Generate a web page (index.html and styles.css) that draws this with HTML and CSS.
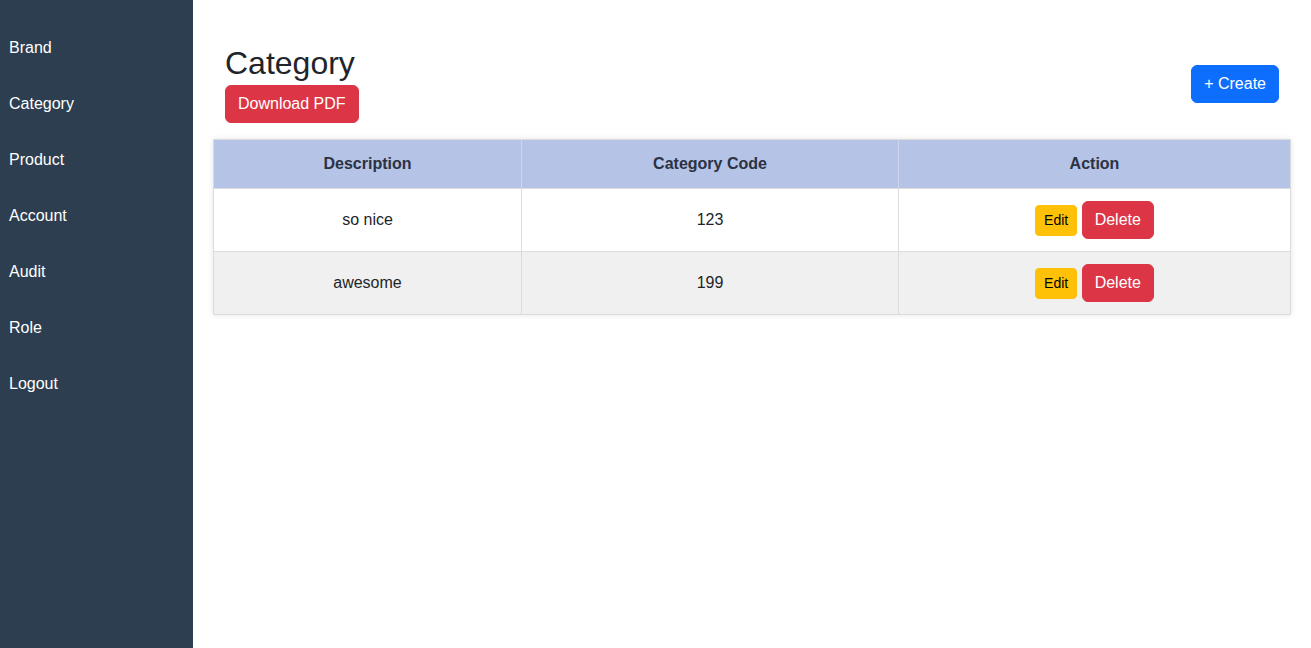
FILE: index.html
```html
<!DOCTYPE html>
<html lang="en">
<head>
<meta charset="utf-8">
<title>Category</title>
<link rel="stylesheet" href="styles.css">
</head>
<body>
<div class="app">
  <nav class="sidebar">
    <a class="nav-link" href="#">Brand</a>
    <a class="nav-link" href="#">Category</a>
    <a class="nav-link" href="#">Product</a>
    <a class="nav-link" href="#">Account</a>
    <a class="nav-link" href="#">Audit</a>
    <a class="nav-link" href="#">Role</a>
    <a class="nav-link" href="#">Logout</a>
  </nav>
  <main class="main">
    <div class="page-head">
      <div class="title-block">
        <h2 class="title">Category</h2>
        <button class="btn btn-danger">Download PDF</button>
      </div>
      <button class="btn btn-primary">+ Create</button>
    </div>
    <table class="data-table">
      <thead>
        <tr>
          <th class="col-desc">Description</th>
          <th class="col-code">Category Code</th>
          <th>Action</th>
        </tr>
      </thead>
      <tbody>
        <tr>
          <td>so nice</td>
          <td>123</td>
          <td><button class="btn btn-warning btn-sm">Edit</button> <button class="btn btn-danger">Delete</button></td>
        </tr>
        <tr class="alt">
          <td>awesome</td>
          <td>199</td>
          <td><button class="btn btn-warning btn-sm">Edit</button> <button class="btn btn-danger">Delete</button></td>
        </tr>
      </tbody>
    </table>
  </main>
</div>
</body>
</html>
```
FILE: styles.css
```css
* { box-sizing: border-box; }
html, body { margin: 0; padding: 0; height: 100%; }
body {
  font-family: "Liberation Sans", Arial, sans-serif;
  font-size: 16px;
  color: #212529;
  background: #fff;
}
.app {
  display: flex;
  min-height: 648px;
}
.sidebar {
  width: 193px;
  flex: 0 0 193px;
  background: #2c3e50;
  padding-top: 20px;
  display: flex;
  flex-direction: column;
}
.nav-link {
  display: flex;
  align-items: center;
  height: 56px;
  padding-left: 9px;
  color: #fff;
  text-decoration: none;
  font-size: 16px;
}
.main {
  flex: 1;
  padding: 44px 20px 20px;
}
.page-head {
  display: flex;
  align-items: center;
  justify-content: space-between;
  padding: 0 12px;
}
.title-block {
  display: flex;
  flex-direction: column;
  align-items: flex-start;
}
.title {
  margin: 0 0 3px;
  font-size: 32px;
  font-weight: 400;
  line-height: 1.2;
}
.btn {
  font-family: "Liberation Sans", Arial, sans-serif;
  font-size: 16px;
  line-height: 24px;
  padding: 6px 12px;
  border: 1px solid transparent;
  border-radius: 6px;
  color: #fff;
  cursor: pointer;
}
.btn-danger { background: #dc3545; border-color: #dc3545; }
.btn-primary { background: #0d6efd; border-color: #0d6efd; margin-top: 1px; }
.btn-warning { background: #ffc107; border-color: #ffc107; color: #000; }
.btn-sm {
  font-size: 14px;
  line-height: 21px;
  padding: 4px 8px;
  border-radius: 4px;
}
.data-table {
  margin-top: 16px;
  width: 100%;
  border-collapse: collapse;
  border: 1px solid #dcdcdc;
  box-shadow: 0 0 6px rgba(0, 0, 0, 0.1);
  text-align: center;
}
.data-table th {
  background: #b4c3e6;
  color: #2b3243;
  font-weight: 700;
  height: 49px;
  padding: 0 12px;
  border-left: 1px solid #cfd6e8;
}
.data-table th:first-child { border-left: none; }
.col-desc { width: 308px; }
.col-code { width: 377px; }
.data-table td {
  height: 63px;
  padding: 0 12px;
  border-top: 1px solid #dcdcdc;
  border-left: 1px solid #dcdcdc;
  vertical-align: middle;
}
.data-table td:first-child { border-left: none; }
.data-table tbody tr { background: #fff; }
.data-table tbody tr.alt { background: #f0f0f0; }
```
